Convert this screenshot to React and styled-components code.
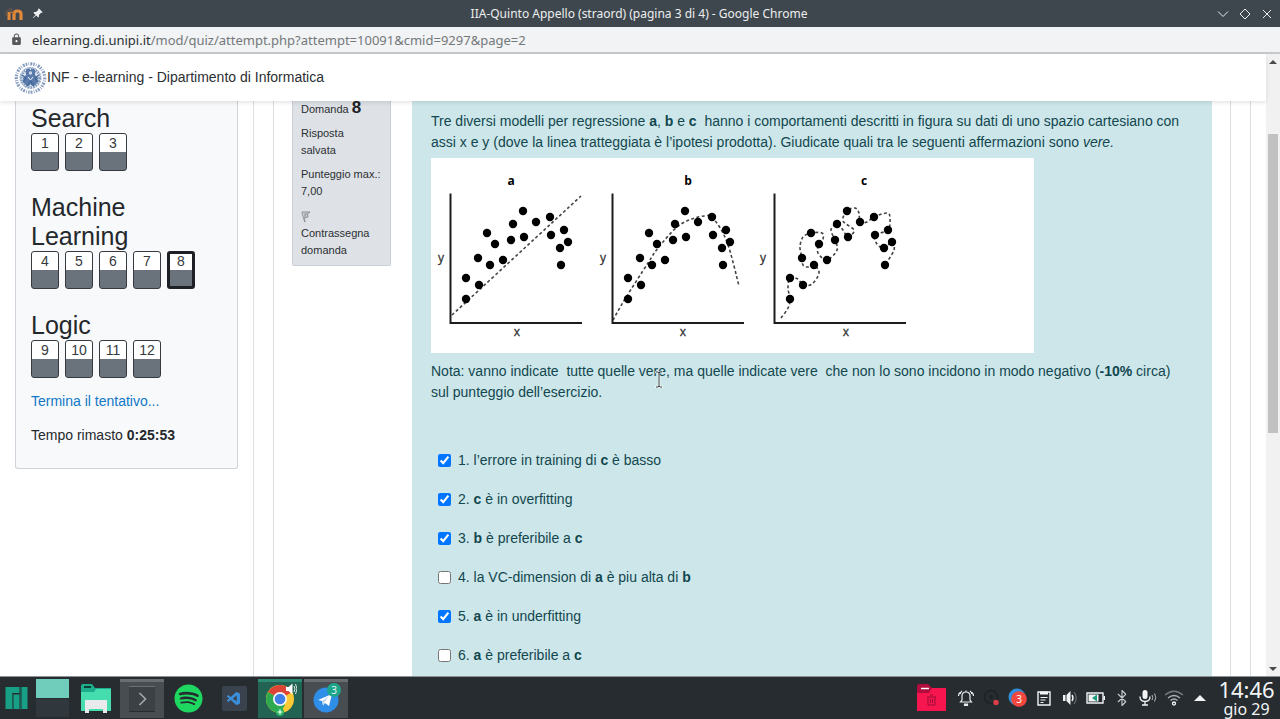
import React from "react";
import styled, { createGlobalStyle } from "styled-components";
import { BsPinAngleFill } from "react-icons/bs";
import { MdLock } from "react-icons/md";
import { FaSpotify } from "react-icons/fa";
import { VscVscode } from "react-icons/vsc";
import { Bluetooth } from "lucide-react";

const GlobalStyle = createGlobalStyle`
  *, *::before, *::after { box-sizing: border-box; }
  body {
    margin: 0;
    font-family: "Liberation Sans", Arial, sans-serif;
    font-size: 14px;
    line-height: 21px;
    color: #24282c;
    background: #fff;
  }
  button { font: inherit; color: inherit; border: 0; padding: 0; background: none; }
  svg { display: block; flex: none; }
`;

const Desktop = styled.div`
  display: flex;
  flex-direction: column;
  height: 100vh;
  overflow: hidden;
`;

/* Window frame */

const TitleBar = styled.header`
  display: grid;
  grid-template-columns: 1fr auto 1fr;
  align-items: center;
  flex: none;
  height: 27px;
  padding: 0 6px 0 4px;
  background: #3f474e;
  color: #eceeef;
  font: 12px/18px "Noto Sans", sans-serif;
`;

const TitleSide = styled.div`
  display: flex;
  align-items: center;
  justify-content: ${(p) => (p.$end ? "flex-end" : "flex-start")};
  gap: 8px;
`;

const WindowButton = styled.button`
  display: flex;
  width: 14px;
  height: 14px;
`;

const AddressBar = styled.div`
  display: flex;
  align-items: center;
  flex: none;
  gap: 9px;
  height: 27px;
  padding-left: 10px;
  background: #f1f3f4;
  border-bottom: 2px solid #c6c9cb;
  font: 13px/20px "Noto Sans", sans-serif;
  color: #74787b;
`;

const Host = styled.span`
  color: #2c3033;
`;

const Viewport = styled.div`
  display: flex;
  flex: 1;
  min-height: 0;
`;

const Page = styled.div`
  display: flex;
  flex-direction: column;
  flex: 1;
  min-width: 0;
`;

const Scrollbar = styled.div`
  display: flex;
  flex-direction: column;
  align-items: center;
  width: 14px;
  background: #f1f1f1;
`;

const ScrollButton = styled.button`
  display: flex;
  align-items: center;
  justify-content: center;
  width: 14px;
  height: 15px;
`;

const ScrollTrack = styled.div`
  flex: 1;
  width: 10px;
  padding-top: 65px;
`;

const ScrollThumb = styled.div`
  height: 51%;
  min-height: 299px;
  background: #c1c1c1;
`;

/* Site */

const Navbar = styled.nav`
  position: relative;
  z-index: 1;
  display: flex;
  align-items: center;
  flex: none;
  height: 47px;
  padding-left: 14px;
  background: #fff;
  box-shadow: 0 2px 4px rgba(0, 0, 0, 0.1);
`;

const Brand = styled.a`
  display: flex;
  align-items: center;
  color: #2b2f33;
  text-decoration: none;
`;

const Columns = styled.div`
  display: grid;
  grid-template-columns: 254px 1fr 16px;
  column-gap: 19px;
  flex: 1;
  min-height: 0;
  overflow: hidden;
`;

const SideColumn = styled.aside`
  padding: 0 15px;
  border-right: 1px solid #dee2e6;
`;

const MainColumn = styled.main`
  display: grid;
  grid-template-columns: 99px 1fr;
  column-gap: 21px;
  align-items: start;
  padding: 0 18px;
  border: 1px solid #dcdfe2;
  border-width: 0 1px;
`;

const DrawerColumn = styled.aside`
  border-left: 1px solid #dcdfe2;
`;

const QuizNav = styled.section`
  padding: 3px 15px 22px;
  background: #f8f9fb;
  border: 1px solid #ced4da;
  border-top: 0;
  border-radius: 0 0 3px 3px;
`;

const Section = styled.div`
  & + & { margin-top: 22px; }
`;

const SectionTitle = styled.h3`
  margin: 0;
  font-size: 25px;
  font-weight: 400;
  line-height: 29px;
`;

const QuestionLinks = styled.div`
  display: flex;
  gap: 6px;
`;

const QuestionLink = styled.a`
  width: 28px;
  height: 38px;
  border: ${(p) => (p.$current ? 3 : 1)}px solid ${(p) => (p.$current ? "#1d2125" : "#343a40")};
  border-radius: 3px;
  background: linear-gradient(#fff 0 ${(p) => (p.$current ? 16 : 18)}px, #6a737b 0);
  color: #343a40;
  line-height: ${(p) => (p.$current ? 14 : 18)}px;
  text-align: center;
  text-decoration: none;
`;

const FinishLink = styled.a`
  display: block;
  margin-top: 13px;
  color: #1177c6;
  text-decoration: none;
`;

const TimeLeft = styled.div`
  margin-top: 13px;
`;

const QuestionInfo = styled.section`
  padding: 0 4px 6px 8px;
  background: #dee2e6;
  border: 1px solid #cad0d7;
  border-top: 0;
  border-radius: 0 0 2px 2px;
  font-size: 11px;
  line-height: 17px;
  color: #2b2f33;
`;

const InfoTitle = styled.h3`
  margin: 0;
  font-size: 11px;
  font-weight: 400;
  line-height: 17px;

  strong { font-size: 17px; line-height: 1px; color: #1d2125; }
`;

const InfoLine = styled.p`
  margin: 7px 0 0;
`;

const FlagButton = styled.button`
  display: block;
  margin-top: 11px;
  text-align: left;

  svg { margin-bottom: 2px; }
`;

const QuestionBody = styled.section`
  min-height: 100%;
  padding: 10px 19px;
  background: #cde6e9;
  color: #12474f;
`;

const Paragraph = styled.p`
  margin: 0;
  padding-right: 8px;
`;

const Figure = styled.figure`
  width: 603px;
  max-width: 100%;
  margin: 5px 0 8px;
  background: #fff;
`;

const Answers = styled.div`
  margin-top: 38px;
`;

const Answer = styled.label`
  display: flex;
  align-items: center;
  gap: 7px;
  height: 39px;
  padding-left: 7px;
`;

const Tick = styled.input`
  width: 13px;
  height: 13px;
  margin: 0;
`;

const Pointer = styled.svg`
  position: absolute;
  left: 654px;
  top: 371px;
  z-index: 2;
`;

/* Taskbar */

const Taskbar = styled.footer`
  display: flex;
  align-items: center;
  justify-content: space-between;
  flex: none;
  height: 43px;
  padding-left: 5px;
  background: #262c30;
  border-top: 1px solid #8e9294;
  color: #f2f4f5;
  font-family: "Noto Sans", sans-serif;
`;

const TaskGroup = styled.div`
  display: flex;
  align-items: center;
`;

const Pager = styled.div`
  display: grid;
  grid-template-rows: 1fr 1fr;
  gap: 1px;
  width: 33px;
  height: 38px;
  margin: 0 5px 0 7px;
`;

const PagerDesktop = styled.button`
  background: ${(p) => (p.$active ? "#70cdbb" : "#31383d")};
`;

const taskTones = {
  none: ["transparent", "transparent"],
  open: ["#484d52", "#696e72"],
  active: ["#226353", "#2d8b76"],
};

const Task = styled.button`
  display: flex;
  align-items: center;
  justify-content: center;
  width: 44px;
  height: 39px;
  margin-right: 2px;
  background: ${(p) => taskTones[p.$tone][0]};
  border-top: 3px solid ${(p) => taskTones[p.$tone][1]};
  padding-bottom: 2px;
`;

const TrayFolder = styled.button`
  margin-right: 7px;
`;

const TrayItem = styled.button`
  display: flex;
  align-items: center;
  justify-content: center;
  width: 26px;
  height: 40px;
`;

const Clock = styled.time`
  display: flex;
  flex-direction: column;
  align-items: center;
  width: 67px;
  font-size: 22px;
  line-height: 21px;
`;

const ClockDate = styled.span`
  font-size: 16px;
  line-height: 18px;
`;

/* Regression plots */

const samples = [
  [92, 53], [82, 66], [105, 64], [119, 59], [56, 75], [64, 86], [80, 82],
  [93, 79], [120, 77], [133, 72], [137, 84], [129, 90], [130, 107], [47, 100],
  [59, 107], [72, 102], [35, 120], [48, 127], [35, 141],
];

const plots = [
  { name: "a", shift: 0, titleX: 80, yX: 10, xX: 86, fit: [[21, 157], [150, 38]] },
  {
    name: "b", shift: 162, titleX: 95, yX: 10, xX: 90,
    fit: [[20, 162], [32, 141], [55, 105], [65, 90], [84, 69], [99, 61], [112, 58], [120, 60], [134, 84], [146, 128]],
  },
  {
    name: "c", shift: 324, titleX: 109, yX: 8, xX: 91,
    fit: [
      [26, 160], [33, 150], [35, 141], [33, 130], [35, 120], [43, 121], [48, 127],
      [57, 126], [64, 115], [59, 107], [53, 109], [48, 107], [47, 100], [45, 89],
      [48, 79], [56, 75], [67, 75], [68, 81], [64, 86], [63, 95], [72, 102],
      [82, 92], [80, 82], [76, 72], [82, 66], [88, 72], [93, 79], [99, 72],
      [88, 63], [92, 53], [100, 50], [104, 55], [105, 64], [112, 64], [119, 59],
      [132, 55], [135, 60], [133, 72], [120, 77], [122, 86], [129, 90], [137, 84],
      [139, 92], [130, 107],
    ],
  },
];

function smoothPath(points) {
  let d = `M${points[0].join(" ")}`;
  for (let i = 0; i < points.length - 1; i += 1) {
    const p0 = points[i - 1] || points[i];
    const p1 = points[i];
    const p2 = points[i + 1];
    const p3 = points[i + 2] || p2;
    const c1 = [p1[0] + (p2[0] - p0[0]) / 6, p1[1] + (p2[1] - p0[1]) / 6];
    const c2 = [p2[0] - (p3[0] - p1[0]) / 6, p2[1] - (p3[1] - p1[1]) / 6];
    d += `C${c1.join(" ")} ${c2.join(" ")} ${p2.join(" ")}`;
  }
  return d;
}

function RegressionPlots() {
  return (
    <svg viewBox="0 0 603 195" width="100%" role="img" aria-label="Modelli a, b, c">
      {plots.map((p) => (
        <g key={p.name} transform={`translate(${p.shift} 0)`}>
          <path d={smoothPath(p.fit)} fill="none" stroke="#444" strokeWidth="1.600" strokeDasharray="3 2.400" />
          <path d="M19.500 35.500V165H151" fill="none" stroke="#1c1c1c" strokeWidth="2" />
          {samples.map(([x, y]) => <circle key={`${x}-${y}`} cx={x} cy={y} r="4.200" fill="#000" />)}
          <g textAnchor="middle" fontFamily="Open Sans, sans-serif">
            <text x={p.titleX} y="27" fontSize="12" fontWeight="700" fill="#000">{p.name}</text>
            <text x={p.yX} y="104" fontSize="12" fill="#333" stroke="#333" strokeWidth=".3">y</text>
            <text x={p.xX} y="178" fontSize="12" fill="#333" stroke="#333" strokeWidth=".3">x</text>
          </g>
        </g>
      ))}
    </svg>
  );
}

/* Icons */

const MoodleIcon = () => (
  <svg width="20" height="16" viewBox="0 0 20 16" fill="none">
    <path d="M1 5l5-3 4 1-4 2z" fill="#5c5350" />
    <path d="M2 5v5" stroke="#6d5a4d" />
    <path d="M5 14V6" stroke="#e0893a" strokeWidth="3" />
    <path d="M10 14V8q0-3 3.500-3T17 8v6" stroke="#e0893a" strokeWidth="3.200" />
    <path d="M6 6q3 0 4 1.500" stroke="#b56f32" strokeWidth="1.500" />
  </svg>
);

const Seal = () => (
  <svg width="33" height="34" viewBox="0 0 33 34" fill="none" stroke="#47699c">
    <circle cx="16.500" cy="17" r="14.200" strokeWidth="3.200" strokeDasharray="1.500 1.200 .7 1.300 2 1" opacity=".65" />
    <circle cx="16.500" cy="17" r="10.500" fill="#dfe7f1" strokeWidth=".6" strokeDasharray="2 1" />
    <circle cx="16.500" cy="17" r="9" strokeWidth="2.400" strokeDasharray="1.400 1.100" opacity=".6" />
    <path d="M12 10l2-2 2.500 1.500L19 8l2 2-.5 4 3 3-1 5-3 3-3-2-3 2-3-3-1-5 3-3z" fill="#5a7bac" strokeWidth=".8" />
    <circle cx="16.500" cy="12" r="2.200" fill="#c9d6e8" strokeWidth=".8" />
    <path d="M8 14l4 3-3 4M25 14l-4 3 3 4M13 25l3.500-5 3.500 5" strokeWidth="1.300" />
    <path d="M14 16l2.500 3 2.500-3" stroke="#e9eff7" strokeWidth="1" />
  </svg>
);

const FlagIcon = () => (
  <svg width="10" height="12" viewBox="0 0 10 12" fill="none" stroke="#8d9196">
    <path d="M1 1l3 10" strokeWidth="1.400" />
    <path d="M1 1h8L6.500 3l.5 3-4 1" fill="#c9cdd1" />
    <path d="M4 2v4M6 2L4 5" strokeWidth=".8" />
  </svg>
);

const ManjaroIcon = () => (
  <svg width="24" height="24" viewBox="0 0 24 24" fill="#17a085">
    <path d="M0.500 1h14v6H7v16H.5zM8.500 8.500h6V23h-6zM16.500 1h6v22h-6z" />
    <path d="M7.500 7.500v16M15.500 1v23" stroke="#1c5c50" fill="none" />
  </svg>
);

const FilesIcon = () => (
  <svg width="32" height="30" viewBox="0 0 32 30">
    <path d="M1 2q0-2 2-2h9l3 4h16v23H1z" fill="#1fae8d" />
    <path d="M1 8h13l2-3h15v22H1z" fill="#45dcae" />
    <path d="M4 2h7v2H4z" fill="#0b3f38" />
    <path d="M5 16h22v13h-4v-4H9v4H5z" fill="#e9eaeb" />
  </svg>
);

const TerminalIcon = () => (
  <svg width="28" height="28" viewBox="0 0 28 28" fill="none">
    <rect x="1" y="1" width="26" height="26" fill="#3b4144" />
    <path d="M1 1.500h26" stroke="#6b7072" />
    <path d="M1 26.500h26" stroke="#272c2f" />
    <path d="M11.500 8l6 6-6 6" stroke="#a3a7a9" strokeWidth="1.700" />
  </svg>
);

const CodeTile = styled.span`
  display: flex;
  align-items: center;
  justify-content: center;
  width: 25px;
  height: 25px;
  border-radius: 2px;
  background: #3a434d;
  color: #3b8fd8;
  font-size: 16px;
`;

const ChromeIcon = () => (
  <svg width="34" height="34" viewBox="0 0 34 34">
    <circle cx="17" cy="17" r="14" fill="#fcc934" />
    <path d="M17 17L4.900 10A14 14 0 0 1 29.100 10z" fill="#dd4437" />
    <path d="M17 17L4.900 10A14 14 0 0 0 17 31l5-8z" fill="#2da94f" />
    <path d="M17 10h12.100A14 14 0 0 0 27 7z" fill="#dd4437" />
    <circle cx="17" cy="17" r="7" fill="#f4f6f8" />
    <circle cx="17" cy="17" r="5.300" fill="#3f7fe8" />
    <path d="M23 5h2.500l4-3.500v11l-4-3.500H23z" fill="#fff" />
    <path d="M31 4q2 3 0 6M32.500 2q3 5 0 10" stroke="#dfe9e6" fill="none" />
    <circle cx="17" cy="30" r="4" fill="#27b45c" />
    <path d="M14.500 30h5M17 27.500v5" stroke="#fff" strokeWidth="1.200" />
  </svg>
);

const TelegramIcon = () => (
  <svg width="34" height="34" viewBox="0 0 34 34">
    <circle cx="17" cy="18" r="12.500" fill="#2f8ee8" />
    <path d="M9 18l14-6-3 12-4-3-2 2.500-1-4.500z" fill="#fff" />
    <path d="M13 19l7-5-4.500 6L14 23.500z" fill="#bcd7f2" />
    <circle cx="25" cy="8" r="7" fill="#1da58a" />
    <text x="25" y="12" fontSize="10" fill="#e8f6f2" textAnchor="middle">3</text>
  </svg>
);

const TrashFolderIcon = () => (
  <svg width="29" height="28" viewBox="0 0 29 28">
    <path d="M0 2q0-2 2-2h9l4 4h13v8H0z" fill="#b20d3c" />
    <path d="M0 9h12l3-5h14v23H0z" fill="#f6154f" />
    <path d="M4 4.500h8" stroke="#fff" strokeWidth="1.500" />
    <path d="M10 13h9M11 13v8h7v-8M13 11h3M13.500 15v4M15.500 15v4" stroke="#9b0e36" fill="none" />
  </svg>
);

const BellIcon = () => (
  <svg width="18" height="18" viewBox="0 0 18 18" fill="none" stroke="#eceeef" strokeWidth="1.200">
    <path d="M3.500 13h11L13 11V7q0-4-4-4T5 7v4zM9 3V1.500" />
    <path d="M3 3.500Q1.500 5 1.500 7M5 2Q3.500 3 3.200 5M15 3.500Q16.500 5 16.500 7M13 2q1.500 1 1.800 3" />
    <path d="M7.500 15h3v1.500h-3z" fill="#eceeef" />
  </svg>
);

const RecordIcon = () => (
  <svg width="18" height="18" viewBox="0 0 18 18" fill="none">
    <circle cx="8" cy="8" r="6.500" stroke="#1d2225" strokeWidth="1.500" />
    <circle cx="8" cy="8" r="2" fill="#1d2225" />
    <circle cx="13" cy="13.500" r="2.700" fill="#dd3f49" />
  </svg>
);

const MessagesIcon = () => (
  <svg width="20" height="20" viewBox="0 0 20 20">
    <circle cx="9" cy="9" r="8.500" fill="#2f8fdd" />
    <circle cx="11" cy="11" r="7.800" fill="#f2473e" />
    <text x="11" y="15" fontSize="10" fill="#fff" textAnchor="middle">3</text>
  </svg>
);

const ClipboardIcon = () => (
  <svg width="14" height="16" viewBox="0 0 14 16" fill="none" stroke="#f2f4f5" strokeWidth="1.400">
    <path d="M1 2h12v13H1z" />
    <path d="M3 1.500h8v3H3z" fill="#f2f4f5" stroke="none" />
    <path d="M3.500 7.500h7M3.500 10h5M3.500 12.500h3" strokeWidth="1.200" />
  </svg>
);

const VolumeIcon = () => (
  <svg width="16" height="16" viewBox="0 0 16 16" fill="none" stroke="#f2f4f5">
    <path d="M1 5h2.500v6H1zM4.500 5l4-4v14l-4-4z" fill="#f2f4f5" stroke="none" />
    <path d="M10 5q2 3 0 6" strokeWidth="1.500" />
    <path d="M12 2q4.500 6 0 12" stroke="#72797d" />
  </svg>
);

const BatteryIcon = () => (
  <svg width="20" height="12" viewBox="0 0 20 12" fill="none">
    <path d="M1 1h16v10H1z" stroke="#f2f4f5" strokeWidth="1.400" />
    <path d="M17.500 4H19v4h-1.500z" fill="#f2f4f5" />
    <path d="M2.500 2.500h10v7h-10z" fill="#f2f4f5" />
    <path d="M11 2.500L6 6l5 3.500z" fill="#1b9c7d" />
  </svg>
);

const MicIcon = () => (
  <svg width="18" height="16" viewBox="0 0 18 16" fill="none" stroke="#f2f4f5">
    <rect x="3.500" y="0" width="5" height="9" rx="2.500" fill="#f2f4f5" stroke="none" />
    <path d="M1 6.500q0 5 5 5t5-5M6 11.500V15M3 15h6" strokeWidth="1.300" />
    <path d="M13 5q1.500 2.500 0 5M15.500 3.500q2.500 4 0 8" stroke="#b3b8bb" />
  </svg>
);

const WifiIcon = () => (
  <svg width="20" height="16" viewBox="0 0 20 16" fill="none" stroke="#aeb3b6" strokeWidth="1.300">
    <path d="M1 5q9-7.500 18 0" stroke="#747b7f" />
    <path d="M4 8q6-5 12 0M6.500 10.500q3.500-3 7 0" />
    <circle cx="10" cy="13.500" r="1.500" stroke="#f2f4f5" />
  </svg>
);

const Triangle = ({ width, height, color, down }) => (
  <svg width={width} height={height} viewBox="0 0 8 4" fill={color}>
    <path d={down ? "M0 0h8L4 4z" : "M0 4h8L4 0z"} />
  </svg>
);

/* Content */

const sections = [
  { title: "Search", numbers: [1, 2, 3] },
  { title: "Machine Learning", numbers: [4, 5, 6, 7, 8] },
  { title: "Logic", numbers: [9, 10, 11, 12] },
];

const answers = [
  { checked: true, text: <>1. l’errore in training di <b>c</b> è basso</> },
  { checked: true, text: <>2. <b>c</b> è in overfitting</> },
  { checked: true, text: <>3. <b>b</b> è preferibile a <b>c</b></> },
  { checked: false, text: <>4. la VC-dimension di <b>a</b> è piu alta di <b>b</b></> },
  { checked: true, text: <>5. <b>a</b> è in underfitting</> },
  { checked: false, text: <>6. <b>a</b> è preferibile a <b>c</b></> },
];

const tasks = [
  { label: "File", tone: "none", icon: <FilesIcon /> },
  { label: "Terminale", tone: "open", icon: <TerminalIcon /> },
  { label: "Spotify", tone: "none", icon: <FaSpotify size={29} color="#1ed760" /> },
  { label: "Code", tone: "none", icon: <CodeTile><VscVscode /></CodeTile> },
  { label: "Chrome", tone: "active", icon: <ChromeIcon /> },
  { label: "Telegram", tone: "open", icon: <TelegramIcon /> },
];

const tray = [
  ["Notifiche", <BellIcon />],
  ["Registrazione", <RecordIcon />],
  ["Messaggi", <MessagesIcon />],
  ["Appunti", <ClipboardIcon />],
  ["Volume", <VolumeIcon />],
  ["Batteria", <BatteryIcon />],
  ["Bluetooth", <Bluetooth size={18} strokeWidth={1.5} color="#c9cdcf" />],
  ["Microfono", <MicIcon />],
  ["Rete", <WifiIcon />],
  ["Altro", <Triangle width={12} height={6} color="#f2f4f5" />],
];

export default function App() {
  return (
    <Desktop>
      <GlobalStyle />
      <TitleBar>
        <TitleSide>
          <MoodleIcon />
          <BsPinAngleFill size={11} />
        </TitleSide>
        <span>IIA-Quinto Appello (straord) (pagina 3 di 4) - Google Chrome</span>
        <TitleSide $end>
          <WindowButton aria-label="Riduci">
            <svg width="14" height="14" viewBox="0 0 14 14" fill="none" stroke="#eceeef"><path d="M2 4.500l5 5 5-5" /></svg>
          </WindowButton>
          <WindowButton aria-label="Ingrandisci">
            <svg width="14" height="14" viewBox="0 0 14 14" fill="none" stroke="#eceeef"><path d="M7 2l5 5-5 5-5-5z" /></svg>
          </WindowButton>
          <WindowButton aria-label="Chiudi">
            <svg width="14" height="14" viewBox="0 0 14 14" fill="none" stroke="#eceeef"><path d="M3 3l8 8M11 3l-8 8" /></svg>
          </WindowButton>
        </TitleSide>
      </TitleBar>
      <AddressBar>
        <MdLock size={13} color="#55595c" />
        <span><Host>elearning.di.unipi.it</Host>/mod/quiz/attempt.php?attempt=10091&amp;cmid=9297&amp;page=2</span>
      </AddressBar>

      <Viewport>
        <Page>
          <Navbar>
            <Brand href="#"><Seal />INF - e-learning - Dipartimento di Informatica</Brand>
          </Navbar>
          <Columns>
            <SideColumn>
              <QuizNav>
                {sections.map((s) => (
                  <Section key={s.title}>
                    <SectionTitle>{s.title}</SectionTitle>
                    <QuestionLinks>
                      {s.numbers.map((n) => (
                        <QuestionLink key={n} href={`#q${n}`} $current={n === 8}>{n}</QuestionLink>
                      ))}
                    </QuestionLinks>
                  </Section>
                ))}
                <FinishLink href="#fine">Termina il tentativo...</FinishLink>
                <TimeLeft>Tempo rimasto <b>0:25:53</b></TimeLeft>
              </QuizNav>
            </SideColumn>
            <MainColumn>
              <QuestionInfo>
                <InfoTitle>Domanda <strong>8</strong></InfoTitle>
                <InfoLine>Risposta<br />salvata</InfoLine>
                <InfoLine>Punteggio max.: 7,00</InfoLine>
                <FlagButton><FlagIcon />Contrassegna domanda</FlagButton>
              </QuestionInfo>
              <QuestionBody>
                <Paragraph>
                  Tre diversi modelli per regressione <b>a</b>, <b>b</b> e <b>c</b>{"\u00a0 "}hanno i comportamenti
                  descritti in figura su dati di uno spazio cartesiano con assi x e y (dove la linea tratteggiata
                  è l’ipotesi prodotta). Giudicate quali tra le seguenti affermazioni sono <i>vere.</i>
                </Paragraph>
                <Figure><RegressionPlots /></Figure>
                <Paragraph>
                  Nota: vanno indicate{"\u00a0 "}tutte quelle vere, ma quelle indicate vere{"\u00a0 "}che non lo sono
                  incidono in modo negativo (<b>-10%</b> circa) sul punteggio dell’esercizio.
                </Paragraph>
                <Answers>
                  {answers.map((a, i) => (
                    <Answer key={i}>
                      <Tick type="checkbox" defaultChecked={a.checked} />
                      <span>{a.text}</span>
                    </Answer>
                  ))}
                </Answers>
              </QuestionBody>
            </MainColumn>
            <DrawerColumn />
          </Columns>
        </Page>
        <Scrollbar>
          <ScrollButton aria-label="Su"><Triangle width={8} height={4} color="#4a4a4a" /></ScrollButton>
          <ScrollTrack><ScrollThumb /></ScrollTrack>
          <ScrollButton aria-label="Giù"><Triangle width={8} height={4} color="#4a4a4a" down /></ScrollButton>
        </Scrollbar>
      </Viewport>

      <Taskbar>
        <TaskGroup>
          <button aria-label="Menu"><ManjaroIcon /></button>
          <Pager>
            <PagerDesktop $active aria-label="Desktop 1" />
            <PagerDesktop aria-label="Desktop 2" />
          </Pager>
          {tasks.map((t) => (
            <Task key={t.label} $tone={t.tone} aria-label={t.label}>{t.icon}</Task>
          ))}
        </TaskGroup>
        <TaskGroup>
          <TrayFolder aria-label="Cestino"><TrashFolderIcon /></TrayFolder>
          {tray.map(([label, icon]) => (
            <TrayItem key={label} aria-label={label}>{icon}</TrayItem>
          ))}
          <Clock>14:46<ClockDate>gio 29</ClockDate></Clock>
        </TaskGroup>
      </Taskbar>

      <Pointer width="10" height="17" viewBox="0 0 10 17" fill="none" aria-hidden="true">
        <path d="M1 1h2.500L5 2.500 6.500 1H9M5 2.500v12M1 16h2.500L5 14.500 6.500 16H9" stroke="#fff" strokeWidth="2.500" opacity=".6" />
        <path d="M2 1h2l1 1 1-1h2M5 2v13M2 16h2l1-1 1 1h2" stroke="#444" />
      </Pointer>
    </Desktop>
  );
}
